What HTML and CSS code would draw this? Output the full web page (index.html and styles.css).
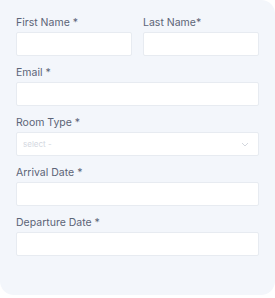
FILE: index.html
```html
<!DOCTYPE html>
<html>
<head>
<meta charset="utf-8">
<link rel="stylesheet" href="styles.css">
</head>
<body>
<form class="card">
  <div class="row">
    <div class="field">
      <label class="label">First Name *</label>
      <div class="input"></div>
    </div>
    <div class="field">
      <label class="label">Last Name*</label>
      <div class="input"></div>
    </div>
  </div>
  <div class="field">
    <label class="label">Email *</label>
    <div class="input"></div>
  </div>
  <div class="field">
    <label class="label">Room Type *</label>
    <div class="input select">
      <span class="placeholder">select -</span>
      <svg class="chev" width="8" height="5" viewBox="0 0 8 5"><path d="M1 1l3 3 3-3" fill="none" stroke="#d3d7de" stroke-width="1"/></svg>
    </div>
  </div>
  <div class="field">
    <label class="label">Arrival Date *</label>
    <div class="input"></div>
  </div>
  <div class="field">
    <label class="label">Departure Date *</label>
    <div class="input"></div>
  </div>
</form>
</body>
</html>
```
FILE: styles.css
```css
html, body {
  margin: 0;
  padding: 0;
  background: #ffffff;
}
.card {
  box-sizing: border-box;
  width: 275px;
  height: 295px;
  background: #f3f6fb;
  border-radius: 0 14px 14px 14px;
  padding: 14px 16px 0 16px;
  display: flex;
  flex-direction: column;
  gap: 8px;
  font-family: Inter, "Noto Sans", sans-serif;
}
.row {
  display: grid;
  grid-template-columns: 1fr 1fr;
  gap: 11px;
}
.field {
  display: flex;
  flex-direction: column;
  gap: 1px;
}
.label {
  font-size: 10.5px;
  line-height: 17px;
  color: #5c6477;
}
.input {
  box-sizing: border-box;
  height: 24px;
  background: #ffffff;
  border: 1px solid #e7ebf1;
  border-radius: 2px;
}
.select {
  display: flex;
  align-items: center;
  justify-content: space-between;
  padding: 0 9px 0 6px;
}
.placeholder {
  font-size: 8px;
  color: #d4d8df;
}
.chev {
  display: block;
}
```
